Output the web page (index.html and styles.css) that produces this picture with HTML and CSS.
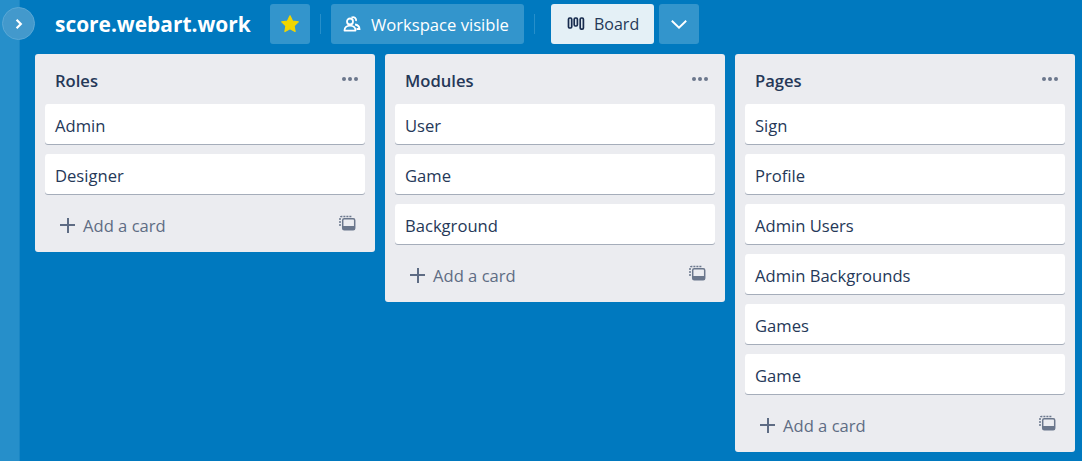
FILE: index.html
```html
<!DOCTYPE html>
<html lang="en">
<head>
    <meta charset="UTF-8">
    <title>score.webart.work</title>
    <link rel="stylesheet" href="styles.css">
</head>
<body>

    <div class="sidebar">
        <button class="sidebar-toggle">
            <svg width="12" height="12" viewBox="0 0 12 12"><path d="M3.600 1.800 7.800 6 3.600 10.200" fill="none" stroke="#fff" stroke-width="2.200"/></svg>
        </button>
    </div>

    <div class="board">
        <div class="topbar">
            <h1 class="board-name">score.webart.work</h1>
            <button class="btn btn-square">
                <svg width="20" height="20" viewBox="0 0 20 20"><path d="M10 1.800 12.500 7l5.800.8-4.200 4 1 5.700L10 14.800l-5.100 2.700 1-5.700-4.200-4L7.500 7z" fill="#f2d600" stroke="#f2d600" stroke-width="1.200" stroke-linejoin="round"/></svg>
            </button>
            <span class="divider"></span>
            <button class="btn btn-visible">
                <svg width="18" height="18" viewBox="0 0 18 18" fill="none" stroke="#fff" stroke-width="1.800"><circle cx="7" cy="6.500" r="3"/><path d="M1.500 15.600c0-3 2.300-4.900 5.500-4.900s5.500 1.900 5.500 4.900z" stroke-linejoin="round"/><path d="M8.500 2.600a3 3 0 0 1 4.500 3.400M12 9.500c2.500.3 4.400 1.800 4.500 4.500h-3"/></svg>
                Workspace visible
            </button>
            <span class="divider divider-right"></span>
            <button class="btn btn-view">
                <svg width="18" height="14" viewBox="0 0 18 14" fill="none" stroke="#172b4d" stroke-width="1.700"><rect x="1.500" y="1" width="3.200" height="10" rx="1.200"/><rect x="7.200" y="1" width="3.200" height="8" rx="1.200"/><rect x="13.200" y="1" width="3.200" height="11.200" rx="1.200"/></svg>
                Board
            </button>
            <button class="btn btn-square">
                <svg width="20" height="20" viewBox="0 0 20 20"><path d="M2.800 6.800 10 13.800l7.200-7" fill="none" stroke="#fff" stroke-width="1.900"/></svg>
            </button>
        </div>

        <div class="lists">
            <div class="list">
                <div class="list-head">
                    <h2>Roles</h2>
                    <span class="dots"><i></i><i></i><i></i></span>
                </div>
                <div class="card">Admin</div>
                <div class="card">Designer</div>
                <div class="list-foot">
                    <span class="add"><span class="plus"></span>Add a card</span>
                    <svg class="template" width="17" height="16" viewBox="0 0 17 16" fill="none"><path d="M1 11V3A1.500 1.500 0 0 1 2.500 1.500H13" stroke="#6b778c" stroke-width="1.500" stroke-dasharray="2 1"/><rect x="3.700" y="3.700" width="12" height="11" rx="1.500" stroke="#6b778c" stroke-width="1.500"/><rect x="4" y="11" width="11.500" height="3.500" fill="#6b778c"/></svg>
                </div>
            </div>

            <div class="list">
                <div class="list-head">
                    <h2>Modules</h2>
                    <span class="dots"><i></i><i></i><i></i></span>
                </div>
                <div class="card">User</div>
                <div class="card">Game</div>
                <div class="card">Background</div>
                <div class="list-foot">
                    <span class="add"><span class="plus"></span>Add a card</span>
                    <svg class="template" width="17" height="16" viewBox="0 0 17 16" fill="none"><path d="M1 11V3A1.500 1.500 0 0 1 2.500 1.500H13" stroke="#6b778c" stroke-width="1.500" stroke-dasharray="2 1"/><rect x="3.700" y="3.700" width="12" height="11" rx="1.500" stroke="#6b778c" stroke-width="1.500"/><rect x="4" y="11" width="11.500" height="3.500" fill="#6b778c"/></svg>
                </div>
            </div>

            <div class="list">
                <div class="list-head">
                    <h2>Pages</h2>
                    <span class="dots"><i></i><i></i><i></i></span>
                </div>
                <div class="card">Sign</div>
                <div class="card">Profile</div>
                <div class="card">Admin Users</div>
                <div class="card">Admin Backgrounds</div>
                <div class="card">Games</div>
                <div class="card">Game</div>
                <div class="list-foot">
                    <span class="add"><span class="plus"></span>Add a card</span>
                    <svg class="template" width="17" height="16" viewBox="0 0 17 16" fill="none"><path d="M1 11V3A1.500 1.500 0 0 1 2.500 1.500H13" stroke="#6b778c" stroke-width="1.500" stroke-dasharray="2 1"/><rect x="3.700" y="3.700" width="12" height="11" rx="1.500" stroke="#6b778c" stroke-width="1.500"/><rect x="4" y="11" width="11.500" height="3.500" fill="#6b778c"/></svg>
                </div>
            </div>
        </div>
    </div>

</body>
</html>
```

FILE: styles.css
```css
html, body {
    height: 100%;
}
body {
    margin: 0;
    display: flex;
    overflow: hidden;
    background-color: #0079bf;
    color: #253858;
    font-family: "Open Sans", "Noto Sans", sans-serif;
    font-size: 16.6px;
}
button {
    font-family: inherit;
    border: none;
    cursor: pointer;
}
.sidebar {
    position: relative;
    flex: none;
    width: 19px;
    background-color: #268fca;
    border-right: 1px solid #1a86c4;
}
.sidebar-toggle {
    position: absolute;
    top: 7px;
    left: 2px;
    width: 33px;
    height: 33px;
    padding: 0;
    display: flex;
    align-items: center;
    justify-content: center;
    background-color: #4399cc;
    border: 1px solid #5aa8d6;
    border-radius: 50%;
}
.board {
    flex: 1;
    min-width: 0;
}
.topbar {
    display: flex;
    align-items: center;
    height: 40px;
    padding: 4px 0 10px 35px;
}
.board-name {
    width: 196px;
    margin: 0 19px 0 0;
    color: #fff;
    font-size: 20.9px;
    font-weight: 700;
    white-space: nowrap;
}
.btn {
    height: 40px;
    display: flex;
    align-items: center;
    justify-content: center;
    padding: 0;
    color: #fff;
    font-size: 16.6px;
    background-color: #3395cc;
    border-radius: 3px;
}
.btn-square {
    width: 40px;
}
.btn-visible {
    width: 193px;
    gap: 10px;
    justify-content: flex-start;
    padding-left: 12px;
}
.btn-view {
    width: 103px;
    gap: 9px;
    justify-content: flex-start;
    padding-left: 16px;
    margin-right: 5px;
    color: #253858;
    font-size: 16px;
    background-color: #e4f0f6;
}
.divider {
    width: 1px;
    height: 20px;
    margin: 0 10px;
    background-color: #268fca;
}
.divider-right {
    margin-right: 16px;
}
.lists {
    display: flex;
    align-items: flex-start;
    gap: 10px;
    padding-left: 15px;
}
.list {
    flex: none;
    width: 320px;
    padding: 0 10px;
    background-color: #ebecf0;
    border-radius: 3px;
}
.list-head {
    height: 50px;
    display: flex;
    align-items: center;
    justify-content: space-between;
    padding: 0 7px 0 10px;
}
.list-head h2 {
    margin: 2px 0 0;
    font-size: 16.6px;
    font-weight: 600;
}
.dots {
    display: flex;
    gap: 2px;
    margin-bottom: 0;
}
.dots i {
    width: 4px;
    height: 4px;
    border-radius: 50%;
    background-color: #6b778c;
}
.card {
    height: 40px;
    line-height: 44px;
    margin-bottom: 10px;
    padding: 0 10px;
    background-color: #fff;
    border-radius: 3px;
    box-shadow: 0 1px 0 #a5adba;
    box-sizing: border-box;
}
.list-foot {
    height: 50px;
    margin-top: -2px;
    display: flex;
    align-items: center;
    justify-content: space-between;
    padding: 0 9px 4px 15px;
    box-sizing: border-box;
    color: #5e6c84;
}
.add {
    display: flex;
    align-items: center;
    gap: 8px;
}
.plus {
    width: 15px;
    height: 15px;
    background:
        linear-gradient(#5e6c84, #5e6c84) center / 100% 2px no-repeat,
        linear-gradient(#5e6c84, #5e6c84) center / 2px 100% no-repeat;
}
.template {
    margin-bottom: 4px;
}
```
